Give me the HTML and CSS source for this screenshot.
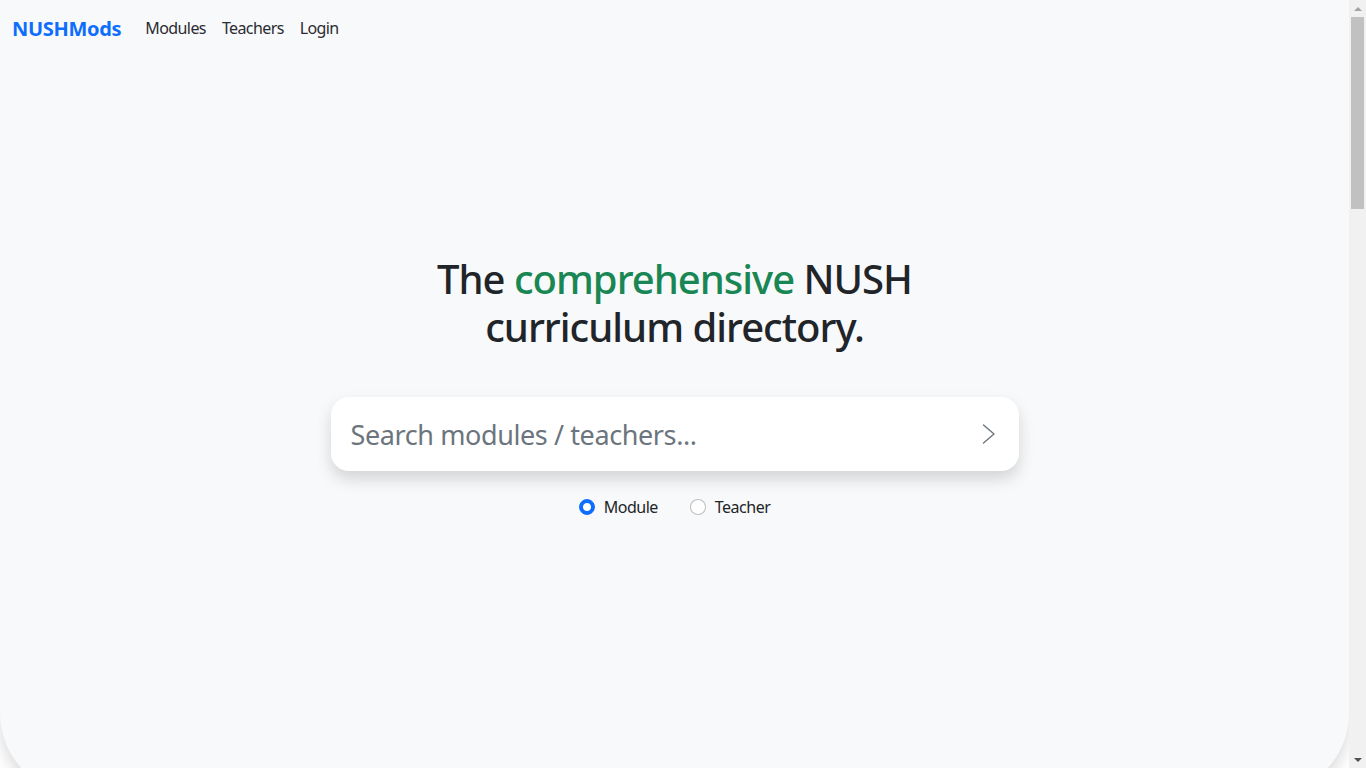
FILE: index.html
```html
<!DOCTYPE html>
<html lang="en">
<head>
<meta charset="utf-8">
<title>NUSHMods</title>
<link rel="stylesheet" href="styles.css">
</head>
<body>
<header class="hero">
  <nav class="navbar">
    <a class="brand" href="#">NUSHMods</a>
    <ul class="nav-links">
      <li><a href="#">Modules</a></li>
      <li><a href="#">Teachers</a></li>
      <li><a href="#">Login</a></li>
    </ul>
  </nav>
  <main class="hero-body">
    <h1 class="title">The <span class="accent">comprehensive</span> NUSH<br>curriculum directory.</h1>
    <form class="search">
      <input class="search-input" type="text" placeholder="Search modules / teachers...">
      <button class="search-btn" type="button" aria-label="Search">
        <svg width="14" height="20" viewBox="0 0 14 20"><polyline points="1.5,1 12,10 1.5,19" fill="none" stroke="#6c757d" stroke-width="1.4" stroke-linecap="round" stroke-linejoin="round"/></svg>
      </button>
    </form>
    <div class="options">
      <label class="option"><input type="radio" name="type" class="radio" checked><span>Module</span></label>
      <label class="option"><input type="radio" name="type" class="radio"><span>Teacher</span></label>
    </div>
  </main>
</header>
<section class="below"></section>
<div class="scrollbar" aria-hidden="true">
  <span class="sb-arrow sb-up"></span>
  <span class="sb-track"><span class="sb-thumb"></span></span>
  <span class="sb-arrow sb-down"></span>
</div>
</body>
</html>
```

FILE: styles.css
```css
* { box-sizing: border-box; }

body {
  margin: 0;
  padding-right: 17px;
  background: #fff;
  font-family: "Noto Sans", "Open Sans", sans-serif;
  color: #212529;
}

.hero {
  height: 795px;
  background: #f8f9fa;
  border-radius: 0 0 82px 82px;
  box-shadow: 0 8px 16px rgba(0, 0, 0, 0.15);
  display: flex;
  flex-direction: column;
}

.navbar {
  height: 56px;
  padding: 8px 12px;
  display: flex;
  align-items: center;
}

.brand {
  font-size: 20px;
  font-weight: 700;
  color: #0d6efd;
  text-decoration: none;
  margin-right: 16px;
  letter-spacing: -0.3px;
}

.nav-links {
  list-style: none;
  margin: 0;
  padding: 0;
  display: flex;
}

.nav-links a {
  display: block;
  padding: 8px;
  font-size: 16px;
  color: #2b2b33;
  text-decoration: none;
  letter-spacing: -0.6px;
}

.hero-body {
  padding-top: 199px;
  display: flex;
  flex-direction: column;
  align-items: center;
}

.title {
  margin: 0 0 46px;
  font-size: 40px;
  font-weight: 500;
  line-height: 48px;
  text-align: center;
  letter-spacing: -1px;
}

.accent { color: #198754; }

.search {
  width: 688px;
  height: 74px;
  background: #fff;
  border-radius: 18px;
  box-shadow: 0 8px 16px rgba(0, 0, 0, 0.15);
  display: flex;
  align-items: center;
  padding: 0 23px 0 20px;
  margin: 0;
}

.search-input {
  flex: 1;
  border: 0;
  outline: none;
  background: transparent;
  font-family: inherit;
  font-size: 27px;
  color: #212529;
  padding: 0;
  letter-spacing: -0.4px;
}

.search-input::placeholder { color: #6c757d; }

.search-btn {
  border: 0;
  background: transparent;
  padding: 0;
  display: flex;
  cursor: pointer;
}

.options {
  margin-top: 24px;
  display: flex;
  gap: 32px;
  height: 24px;
  align-items: center;
}

.option {
  display: flex;
  align-items: center;
  gap: 9px;
  font-size: 16px;
  color: #212529;
  letter-spacing: -0.5px;
}

.radio {
  appearance: none;
  -webkit-appearance: none;
  margin: 0;
  width: 16px;
  height: 16px;
  border-radius: 50%;
  border: 1px solid rgba(0, 0, 0, 0.25);
  background: #fff;
}

.radio:checked {
  border-color: #0d6efd;
  background: radial-gradient(circle, #fff 0 3.5px, #0d6efd 4.5px);
}

.below {
  height: 2141px;
}

/* imitation of the browser's classic scrollbar */
.scrollbar {
  position: fixed;
  top: 0;
  right: 0;
  width: 17px;
  height: 100vh;
  background: #f1f1f1;
  display: flex;
  flex-direction: column;
}

.sb-arrow {
  height: 17px;
  display: flex;
  align-items: center;
  justify-content: center;
}

.sb-arrow::before {
  content: "";
  width: 0;
  height: 0;
  border-left: 4px solid transparent;
  border-right: 4px solid transparent;
}

.sb-up::before { border-bottom: 4px solid #a3a3a3; }
.sb-down::before { border-top: 4px solid #505050; }

.sb-track {
  flex: 1;
  padding: 0 2px;
}

.sb-thumb {
  display: block;
  height: 192px;
  background: #c1c1c1;
}
```
